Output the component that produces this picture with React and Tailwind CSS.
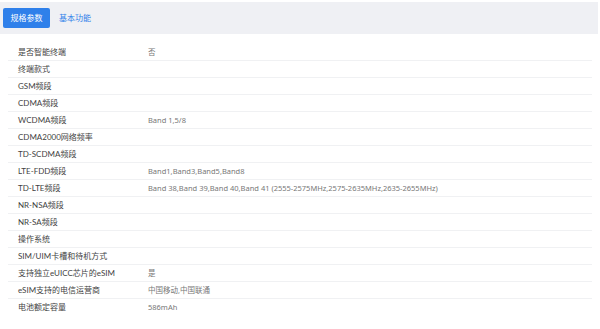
import { useState } from 'react';

const specs = [
  ['是否智能终端', '否'],
  ['终端款式', ''],
  ['GSM频段', ''],
  ['CDMA频段', ''],
  ['WCDMA频段', 'Band 1,5/8'],
  ['CDMA2000网络频率', ''],
  ['TD-SCDMA频段', ''],
  ['LTE-FDD频段', 'Band1,Band3,Band5,Band8'],
  ['TD-LTE频段', 'Band 38,Band 39,Band 40,Band 41 (2555-2575MHz,2575-2635MHz,2635-2655MHz)'],
  ['NR-NSA频段', ''],
  ['NR-SA频段', ''],
  ['操作系统', ''],
  ['SIM/UIM卡槽和待机方式', ''],
  ['支持独立eUICC芯片的eSIM', '是'],
  ['eSIM支持的电信运营商', '中国移动,中国联通'],
  ['电池额定容量', '586mAh'],
];

export default function App() {
  const [tab, setTab] = useState('specs');

  return (
    <div className="w-[600px] h-[329px] bg-white overflow-hidden pt-[2px] font-['Lato','Noto_Sans_CJK_SC',sans-serif]">
      {/* Tabs */}
      <div className="flex items-center gap-[9px] h-[32px] w-[598px] bg-[#eff0f4] pl-[3px]">
        <button
          onClick={() => setTab('specs')}
          className={`h-[20px] w-[47px] rounded-[2px] text-[8px] leading-none ${
            tab === 'specs' ? 'bg-[#2f80ea] text-white' : 'text-[#2f80ea]'
          }`}
        >
          规格参数
        </button>
        <button
          onClick={() => setTab('basic')}
          className={`h-[20px] rounded-[2px] text-[8px] leading-none ${
            tab === 'basic' ? 'bg-[#2f80ea] text-white px-2' : 'text-[#2f80ea]'
          }`}
        >
          基本功能
        </button>
      </div>

      {/* Spec rows */}
      <div className="mt-[10px] ml-[8px] w-[584px]">
        {specs.map(([label, value], i) => (
          <div
            key={label}
            className={`flex items-baseline h-[17px] leading-[16px] ${
              i < specs.length - 1 ? 'border-b border-[#f0f1f3]' : ''
            }`}
          >
            <span className="w-[140px] pl-[10px] text-[8px] text-[#3f3f3f]">{label}</span>
            <span className="text-[7.5px] text-[#777] font-['Noto_Sans','Noto_Sans_CJK_SC',sans-serif]">
              {value}
            </span>
          </div>
        ))}
      </div>
    </div>
  );
}
